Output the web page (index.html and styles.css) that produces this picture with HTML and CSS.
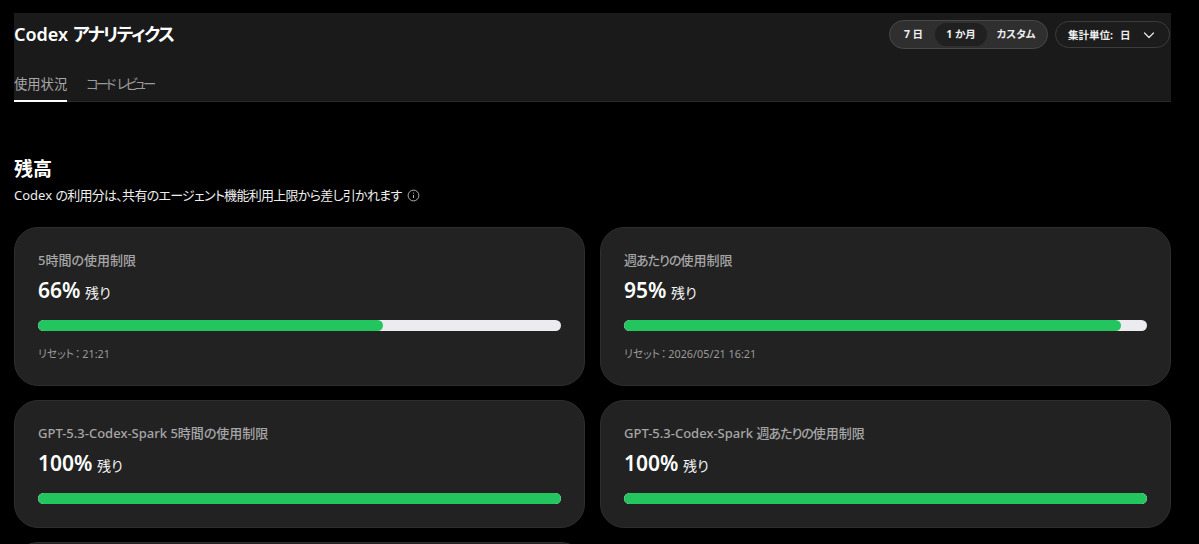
FILE: index.html
```html
<!DOCTYPE html>
<html lang="ja">
<head>
    <meta charset="UTF-8">
    <meta name="viewport" content="width=device-width, initial-scale=1.0">
    <title>Codex アナリティクス</title>
    <link rel="stylesheet" href="styles.css">
</head>
<body>
    <div class="page">
        <header class="header">
            <div class="header-top">
                <h1>Codex <span class="title-kana">アナリティクス</span></h1>
                <div class="controls">
                    <div class="segment">
                        <span class="segment-item">7 日</span>
                        <span class="segment-item active">1 か月</span>
                        <span class="segment-item">カスタム</span>
                    </div>
                    <div class="select">
                        <span>集計単位:</span>
                        <span>日</span>
                        <svg class="chevron" width="12" height="12" viewBox="0 0 12 12" fill="none">
                            <path d="M1.5 4 6 8.5 10.5 4" stroke="#e8e8e8" stroke-width="1.2" stroke-linecap="round" stroke-linejoin="round"/>
                        </svg>
                    </div>
                </div>
            </div>
            <nav class="tabs">
                <span class="tab active">使用状況</span>
                <span class="tab tab-kana">コード レビュー</span>
            </nav>
        </header>

        <section class="balance">
            <h2>残高</h2>
            <p class="subtitle">
                <span>Codex <span class="subtitle-ja">の利用分は、共有のエージェント機能利用上限から差し引かれます</span></span>
                <svg class="info" width="13" height="13" viewBox="0 0 13 13" fill="none">
                    <circle cx="6.5" cy="6.5" r="5.4" stroke="#b0b0b0"/>
                    <path d="M6.5 6v3" stroke="#b0b0b0"/>
                    <circle cx="6.5" cy="4.1" r=".7" fill="#b0b0b0"/>
                </svg>
            </p>

            <div class="cards">
                <div class="card">
                    <div class="card-title">5時間の使用制限</div>
                    <div class="card-value"><strong>66%</strong> <span>残り</span></div>
                    <div class="bar"><div class="bar-fill" style="width: 66%"></div></div>
                    <div class="card-reset">リセット<span class="reset-colon">：</span>21:21</div>
                </div>
                <div class="card">
                    <div class="card-title"><span class="title-tight">週あたりの</span>使用制限</div>
                    <div class="card-value"><strong>95%</strong> <span>残り</span></div>
                    <div class="bar"><div class="bar-fill" style="width: 95%"></div></div>
                    <div class="card-reset">リセット<span class="reset-colon">：</span>2026/05/21 16:21</div>
                </div>
                <div class="card">
                    <div class="card-title">GPT-5.3-Codex-Spark 5時間の使用制限</div>
                    <div class="card-value"><strong>100%</strong> <span>残り</span></div>
                    <div class="bar"><div class="bar-fill" style="width: 100%"></div></div>
                </div>
                <div class="card">
                    <div class="card-title">GPT-5.3-Codex-Spark <span class="title-tight">週あたりの</span>使用制限</div>
                    <div class="card-value"><strong>100%</strong> <span>残り</span></div>
                    <div class="bar"><div class="bar-fill" style="width: 100%"></div></div>
                </div>
                <div class="card card-next"></div>
            </div>
        </section>
    </div>
</body>
</html>
```

FILE: styles.css
```css
html, body {
    height: 100%;
    overflow: hidden;
}
body {
    margin: 0;
    background-color: #000;
    color: #fff;
    font-family: "Noto Sans", "Noto Sans CJK JP", sans-serif;
    font-feature-settings: "palt";
}
.page {
    width: 1157px;
    padding: 13px 0 0 14px;
}
.header {
    height: 88px;
    background-color: #1a1a1a;
    border-bottom: 1px solid #2a2a2a;
    display: flex;
    flex-direction: column;
    justify-content: space-between;
}
.header-top {
    display: flex;
    justify-content: space-between;
    align-items: center;
    padding-top: 7px;
}
.header h1 {
    margin: 0;
    font-size: 18px;
    font-weight: 600;
    line-height: 29px;
}
.title-kana {
    letter-spacing: -1.5px;
}
.controls {
    display: flex;
    align-items: center;
    gap: 7px;
    margin-right: 1px;
}
.segment {
    display: flex;
    align-items: center;
    box-sizing: border-box;
    width: 159px;
    height: 29px;
    padding: 0 2px;
    background-color: #2f2f2f;
    border: 1px solid #484848;
    border-radius: 15px;
}
.segment-item {
    flex: none;
    box-sizing: border-box;
    width: 43px;
    text-align: center;
    white-space: nowrap;
    font-size: 10.5px;
    font-weight: 700;
    color: #eee;
    height: 23px;
    line-height: 23px;
    border-radius: 12px;
}
.segment-item.active {
    width: 52px;
    background-color: #202020;
}
.segment-item:last-child {
    width: 58px;
}
.select {
    display: flex;
    align-items: center;
    box-sizing: border-box;
    width: 115px;
    height: 27px;
    padding: 0 14px 0 12px;
    background-color: #1c1c1c;
    border: 1px solid #3c3c3c;
    border-radius: 14px;
    font-size: 10.5px;
    font-weight: 700;
    color: #eee;
    gap: 7px;
    white-space: nowrap;
}
.chevron {
    margin-left: auto;
}
.tabs {
    display: flex;
    gap: 19px;
}
.tab {
    font-size: 13.3px;
    line-height: 20px;
    padding-bottom: 6px;
    color: #9a9a9a;
    border-bottom: 2px solid transparent;
    margin-bottom: -1px;
}
.tab.active {
    color: #a8a8a8;
    border-bottom-color: #fff;
}
.tab-kana {
    letter-spacing: -3px;
    word-spacing: 3px;
}
.balance {
    padding-top: 54px;
}
.balance h2 {
    margin: 0;
    font-size: 19px;
    font-weight: 700;
    line-height: 26px;
}
.subtitle {
    margin: 4px 0 0;
    font-size: 13px;
    line-height: 18px;
    color: #eee;
    display: flex;
    align-items: center;
    gap: 5px;
}
.subtitle-ja {
    letter-spacing: -0.72px;
}
.cards {
    display: grid;
    grid-template-columns: 571px 571px;
    column-gap: 15px;
    row-gap: 14px;
    margin-top: 23px;
}
.card {
    box-sizing: border-box;
    padding: 22px 23px 0;
    background-color: #222;
    border: 1px solid #2e2e2e;
    border-radius: 24px;
    height: 159px;
}
.card:nth-child(n+3) {
    height: 128px;
}
.card-title {
    font-size: 13px;
    font-weight: 500;
    line-height: 20px;
    color: #a6a6a6;
}
.title-tight {
    letter-spacing: -1px;
}
.card-value {
    margin-top: 5px;
    line-height: 30px;
    height: 30px;
    color: #f2f2f2;
    font-size: 14px;
}
.card-value strong {
    font-size: 21px;
    font-weight: 600;
    color: #fff;
    margin-right: 1px;
}
.bar {
    margin-top: 15px;
    height: 11px;
    background-color: #ecebf0;
    border-radius: 6px;
    overflow: hidden;
}
.bar-fill {
    height: 100%;
    background-color: #22c55e;
    border-radius: 6px;
}
.card-reset {
    margin-top: 14px;
    font-size: 10.8px;
    line-height: 18px;
    color: #9a9a9a;
}
.reset-colon {
    margin: 0 2px 0 1px;
}
```
